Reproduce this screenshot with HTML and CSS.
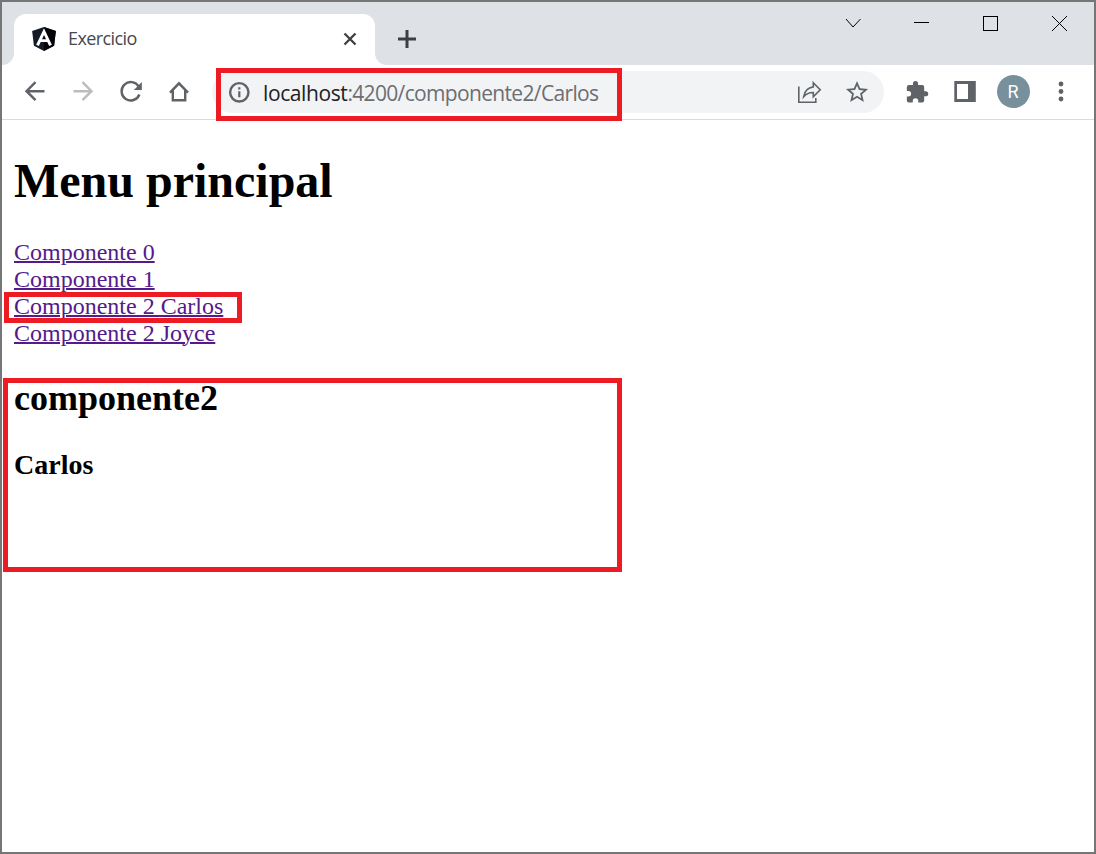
FILE: index.html
```html
<!DOCTYPE html>
<html lang="pt-BR">
<head>
<meta charset="utf-8">
<title>Exercicio</title>
<link rel="stylesheet" href="styles.css">
</head>
<body>
<div class="window">
  <header class="titlebar">
    <div class="tab">
      <svg class="favicon" viewBox="31 30 188 200" preserveAspectRatio="none">
        <path fill="#151b24" d="M125 30 31.9 63.2l14.2 123.1L125 230l78.9-43.7 14.2-123.1z"/>
        <path fill="#02040a" d="M125 30v200l78.9-43.7 14.2-123.1z"/>
        <path fill="none" stroke="#fff" stroke-width="23" d="M74 183 125 68l51 115M95 144h60"/>
      </svg>
      <span class="tab-title">Exercicio</span>
      <svg class="tab-close" viewBox="0 0 14 14"><path d="M1.500 1.500l11 11M12.500 1.500l-11 11"/></svg>
    </div>
    <svg class="new-tab" viewBox="0 0 18 18"><path d="M9 0v18M0 9h18"/></svg>
    <div class="window-buttons">
      <svg viewBox="0 0 69 44"><path d="M28 17l7 8 7.500-8"/></svg>
      <svg viewBox="0 0 69 44"><path class="crisp" d="M27 20.500h15"/></svg>
      <svg viewBox="0 0 69 44"><path class="crisp" d="M27.500 14.500h14v14h-14z"/></svg>
      <svg viewBox="0 0 69 44"><path d="M27 14l15 15M42 14l-15 15"/></svg>
    </div>
  </header>

  <nav class="toolbar">
    <svg class="tool" viewBox="0 0 48 54"><path class="line" d="M33.500 26.200H16M24.500 17.200l-9 9 9 9"/></svg>
    <svg class="tool disabled" viewBox="0 0 48 54"><path class="line" d="M14.500 26.200H32M23.500 17.200l9 9-9 9"/></svg>
    <svg class="tool" viewBox="0 0 48 54"><path class="line" d="M31.700 21.500A9.200 9.200 0 1 0 32.400 29.500"/><path d="M34.800 17v8h-8z"/></svg>
    <svg class="tool" viewBox="0 0 48 54"><path class="line" d="M15 27.700 24 18.300l9 9.400M17.800 25.500v9.800h12.400v-9.800"/></svg>

    <div class="omnibox">
      <svg class="info" viewBox="0 0 22 22"><circle class="line" cx="11.300" cy="11.300" r="9.200"/><path d="M10.200 10.300h2.200v6h-2.200zM10.200 6.300h2.200v2.300h-2.200z"/></svg>
      <span class="url"><span class="host">localhost</span>:4200/componente2/Carlos</span>
      <svg class="action" viewBox="0 0 48 42"><path class="thin" d="M13.800 15.500v15.700h17V27M28.300 11.700l6.900 7-6.900 7v-4.200c-4.300 0-7.200 1.200-9.600 4.200.8-5.200 4-9 9.600-9.800z"/></svg>
      <svg class="action" viewBox="0 0 48 42"><path transform="translate(10.700 7.700) scale(1.110)" d="M22 9.240l-7.190-.62L12 2 9.190 8.630 2 9.240l5.460 4.730L5.820 21 12 17.270 18.180 21l-1.630-7.030zM12 15.400l-3.760 2.270 1-4.280-3.320-2.880 4.380-.38L12 6.100l1.710 4.040 4.380.38-3.320 2.880 1 4.280z"/></svg>
    </div>

    <svg class="tool" viewBox="0 0 48 54"><path transform="translate(11.800 15) scale(1.020)" d="M20.500 11H19V7a2 2 0 0 0-2-2h-4V3.500a2.500 2.500 0 0 0-5 0V5H4a2 2 0 0 0-2 2v3.800h1.500a2.700 2.700 0 0 1 0 5.400H2V20a2 2 0 0 0 2 2h3.800v-1.500a2.700 2.700 0 0 1 5.400 0V22H17a2 2 0 0 0 2-2v-4h1.500a2.500 2.500 0 0 0 0-5z"/></svg>
    <svg class="tool" viewBox="0 0 48 54"><path fill-rule="evenodd" d="M13.300 16h21.500v21H13.300zM16 19v15h11V19z"/></svg>
    <div class="profile"><span class="avatar">R</span></div>
    <svg class="tool" viewBox="0 0 48 54"><circle cx="24" cy="19" r="2.400"/><circle cx="24" cy="26.500" r="2.400"/><circle cx="24" cy="34" r="2.400"/></svg>
  </nav>

  <main class="page">
    <h1>Menu principal</h1>
    <a href="#">Componente 0</a><br>
    <a href="#">Componente 1</a><br>
    <a href="#">Componente 2 Carlos</a><br>
    <a href="#">Componente 2 Joyce</a>
    <h2>componente2</h2>
    <h3>Carlos</h3>
  </main>

  <div class="highlight highlight-url"></div>
  <div class="highlight highlight-link"></div>
  <div class="highlight highlight-output"></div>
</div>
</body>
</html>
```

FILE: styles.css
```css
* { box-sizing: border-box; }

body { margin: 0; }

svg { display: block; flex: none; }

.window {
  position: relative;
  width: 1096px;
  height: 854px;
  border: 2px solid #767676;
  background: #fff;
  overflow: hidden;
}

.titlebar {
  display: flex;
  height: 63px;
  padding-left: 12px;
  background: #dee1e6;
}

.tab {
  position: relative;
  display: flex;
  align-items: center;
  width: 361px;
  height: 51px;
  margin-top: 12px;
  padding: 0 18px 1px;
  border-radius: 12px 12px 0 0;
  background: #fff;
}

.tab::before,
.tab::after {
  content: "";
  position: absolute;
  bottom: 0;
  width: 12px;
  height: 12px;
}

.tab::before {
  left: -12px;
  background: radial-gradient(circle at 0 0, #dee1e6 11.5px, #fff 12.5px);
}

.tab::after {
  right: -12px;
  background: radial-gradient(circle at 100% 0, #dee1e6 11.5px, #fff 12.5px);
}

.favicon { width: 24px; height: 24px; }

.tab-title {
  flex: 1;
  margin-left: 12px;
  padding-bottom: 2px;
  color: #45494d;
  font: 18px/24px "Open Sans", sans-serif;
  letter-spacing: -0.6px;
}

.tab-close {
  width: 14px;
  height: 14px;
  stroke: #3c4043;
  stroke-width: 2.3;
}

.new-tab {
  width: 18px;
  height: 18px;
  margin: 28px 0 0 23px;
  stroke: #3c4043;
  stroke-width: 3;
}

.window-buttons {
  display: flex;
  margin-left: auto;
}

.window-buttons svg {
  width: 69px;
  height: 44px;
  fill: none;
  stroke: #000;
}

.crisp { shape-rendering: crispEdges; }

.toolbar {
  display: flex;
  height: 55px;
  padding-left: 9px;
  border-bottom: 1px solid #d9dbdd;
  background: #fff;
  fill: #5f6368;
}

.tool { width: 48px; height: 54px; }

.line {
  fill: none;
  stroke: #5f6368;
  stroke-width: 2.4;
}

.disabled .line { stroke: #babcbe; }

.thin {
  fill: none;
  stroke: #5f6368;
  stroke-width: 1.6;
}

.omnibox {
  display: flex;
  align-items: center;
  width: 672px;
  height: 42px;
  margin: 6px 9px 0;
  padding: 0 3px 0 16px;
  border-radius: 21px;
  background: #f1f3f4;
}

.info { width: 22px; height: 22px; }

.url {
  flex: 1;
  margin-left: 13px;
  padding-top: 1px;
  color: #6b6e72;
  font: 21px/30px "Open Sans", sans-serif;
  letter-spacing: -0.66px;
  white-space: nowrap;
}

.host { color: #202124; letter-spacing: -0.4px; }

.action { width: 48px; height: 42px; }

.profile {
  display: flex;
  justify-content: center;
  width: 48px;
  padding-top: 10px;
}

.avatar {
  width: 33px;
  height: 33px;
  border-radius: 50%;
  background: #78909c;
  color: #fff;
  font: 18px/33px Roboto, sans-serif;
  text-align: center;
}

.page {
  padding: 0 12px;
  color: #000;
  font: 24px/27px "Liberation Serif", "Times New Roman", serif;
  display: flow-root;
}

.page h1 { margin: 33px 0 31px; font-size: 48px; line-height: 55px; }
.page h2 { margin: 31px 0 30px; font-size: 36px; line-height: 41px; }
.page h3 { margin: 28px 0; font-size: 28px; line-height: 32px; }
.page a { color: #551a8b; text-decoration-thickness: 2px; }

/* Red frames drawn over the window */
.highlight {
  position: absolute;
  border: 5px solid #ed1c24;
}

.highlight-url { left: 214px; top: 66px; width: 406px; height: 53px; }
.highlight-link { left: 2px; top: 290px; width: 238px; height: 31px; }
.highlight-output { left: 1px; top: 376px; width: 619px; height: 194px; }
```
